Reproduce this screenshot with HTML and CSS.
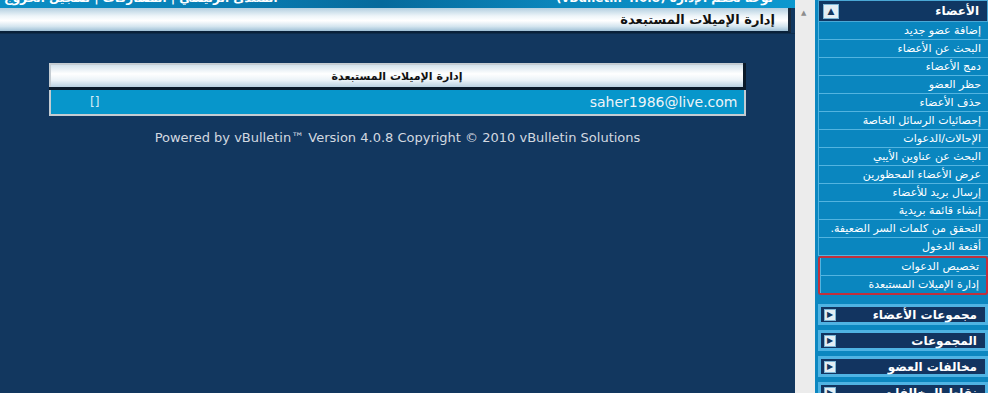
FILE: index.html
```html
<!DOCTYPE html>
<html lang="ar">
<head>
  <meta charset="UTF-8">
  <title>إدارة الإميلات المستبعدة</title>
  <link rel="stylesheet" href="styles.css">
</head>
<body>
  <div class="frame">
    <div class="topbar">
      <div class="topbar-text" dir="rtl">
        <span>لوحة تحكم الإدارة (vBulletin 4.0.8)</span>
        <span class="left-links">المنتدى الرئيسي | المشاركات | تسجيل الخروج</span>
      </div>
    </div>
    <div class="pagehead" dir="rtl">إدارة الإميلات المستبعدة</div>
    <div class="content">
      <table class="tborder" dir="rtl">
        <tr><td class="thead">إدارة الإميلات المستبعدة</td></tr>
        <tr>
          <td class="alt1">
            <span class="email">saher1986@live.com</span>
            <a class="remove" href="#">[]</a>
          </td>
        </tr>
      </table>
      <p class="copyright">Powered by vBulletin™ Version 4.0.8 Copyright © 2010 vBulletin Solutions</p>
    </div>
  </div>

  <div class="scroll-strip"><span>&#9650;</span></div>

  <div class="sidebar" dir="rtl">
    <div class="group">
      <div class="group-head"><span>الأعضاء</span><span class="toggle">&#9650;</span></div>
      <a class="item" href="#">إضافة عضو جديد</a>
      <a class="item" href="#">البحث عن الأعضاء</a>
      <a class="item" href="#">دمج الأعضاء</a>
      <a class="item" href="#">حظر العضو</a>
      <a class="item" href="#">حذف الأعضاء</a>
      <a class="item" href="#">إحصائيات الرسائل الخاصة</a>
      <a class="item" href="#">الإحالات/الدعوات</a>
      <a class="item" href="#">البحث عن عناوين الأيبي</a>
      <a class="item" href="#">عرض الأعضاء المحظورين</a>
      <a class="item" href="#">إرسال بريد للأعضاء</a>
      <a class="item" href="#">إنشاء قائمة بريدية</a>
      <a class="item" href="#">التحقق من كلمات السر الضعيفة.</a>
      <a class="item" href="#">أقنعة الدخول</a>
      <div class="marked">
        <a class="item" href="#">تخصيص الدعوات</a>
        <a class="item" href="#">إدارة الإميلات المستبعدة</a>
      </div>
    </div>
    <div class="closed"><span>مجموعات الأعضاء</span><span class="toggle">&#9654;</span></div>
    <div class="closed"><span>المجموعات</span><span class="toggle">&#9654;</span></div>
    <div class="closed"><span>مخالفات العضو</span><span class="toggle">&#9654;</span></div>
    <div class="closed"><span>نقاط المخالفات</span><span class="toggle">&#9654;</span></div>
  </div>
</body>
</html>
```

FILE: styles.css
```css
html, body { margin: 0; height: 100%; overflow: hidden; }
body { display: flex; font-family: "DejaVu Sans", Verdana, sans-serif; font-size: 12px; background: #ececec; }

.frame { width: 795px; flex: none; background: #12375f; display: flex; flex-direction: column; }
.topbar { height: 8px; overflow: hidden; background: linear-gradient(to right, #0a8fc6, #087cb2 30%, #066a9c 48%, #0a86bc 70%, #0b98cf); }
.topbar-text { margin-top: -9px; display: flex; justify-content: space-between; padding: 0 22px 0 4px; color: #fff; font-size: 12px; font-weight: bold; white-space: nowrap; }
.pagehead { height: 23px; line-height: 23px; padding-right: 13px; margin-right: 4px; font-size: 13px; font-weight: bold; color: #111;
  background: linear-gradient(#b3cfe0, #eef5f9 35%, #ffffff 55%, #d4e5ef 80%, #9fc0d6);
  border-right: 3px solid #1b2b3c; border-bottom: 2px solid #09213a; }
.content { flex: 1; background: #12375f; border-top: 1px solid #0e2c4c; }

.tborder { width: 697px; margin: 29px auto 0; border: 2px solid #c4ccd2; border-collapse: collapse; background: #0796cb; }
.tborder td { padding: 0; }
.thead { height: 22px; text-align: center; font-size: 11px; font-weight: bold; color: #111;
  background: linear-gradient(#d3e2ec, #ffffff 40%, #eaf2f7 70%, #b8d0e0);
  border-bottom: 3px solid #0a1a2a; border-right: 3px solid #0a1a2a; }
.alt1 { height: 24px; background: #0796cb; padding: 0 6px !important; display: flex; justify-content: space-between; align-items: center; }
.email { font-size: 14px; color: #eef4f8; }
.remove { color: #d8ecf6; font-size: 12px; margin-left: 33px; text-decoration: underline; }

.copyright { margin: 14px 0 0; text-align: center; color: #d2d9e0; font-size: 13px; }

.scroll-strip { width: 20px; flex: none; background: #ececec; }
.scroll-strip span { display: block; margin: 9px 0 0 6px; font-size: 7px; color: #8d8d8d; }

.sidebar { flex: 1; background: #0c87c0; padding: 0 0 0 3px; }
.group { background: #0a86bf; }
.group-head { height: 20px; display: flex; justify-content: space-between; align-items: center; padding: 0 8px 0 4px;
  background: #103763; border: 1px solid #4aa8d6; color: #fff; font-weight: bold; font-size: 12px; }
.toggle { width: 14px; height: 13px; line-height: 13px; text-align: center; font-size: 9px; color: #12375f; background: #e4eef4; border: 1px solid #7cb6d6; }
.item { display: block; height: 17px; line-height: 17px; padding-right: 7px; color: #fff; text-decoration: none; font-size: 11px;
  border-bottom: 1px solid #53b4e0; border-left: 1px solid #53b4e0; white-space: nowrap; overflow: hidden; }
.marked { border: 2px solid #c1303c; border-radius: 3px; }
.marked .item:last-child { border-bottom: none; }

.closed { height: 15px; margin-top: 5px; display: flex; justify-content: space-between; align-items: center; padding: 0 8px 0 3px;
  background: #123460; border: 3px solid #4fb3e3; color: #fff; font-weight: bold; font-size: 12px; }
.group + .closed { margin-top: 9px; }
.closed .toggle { width: 10px; height: 10px; line-height: 10px; font-size: 8px; }
```
